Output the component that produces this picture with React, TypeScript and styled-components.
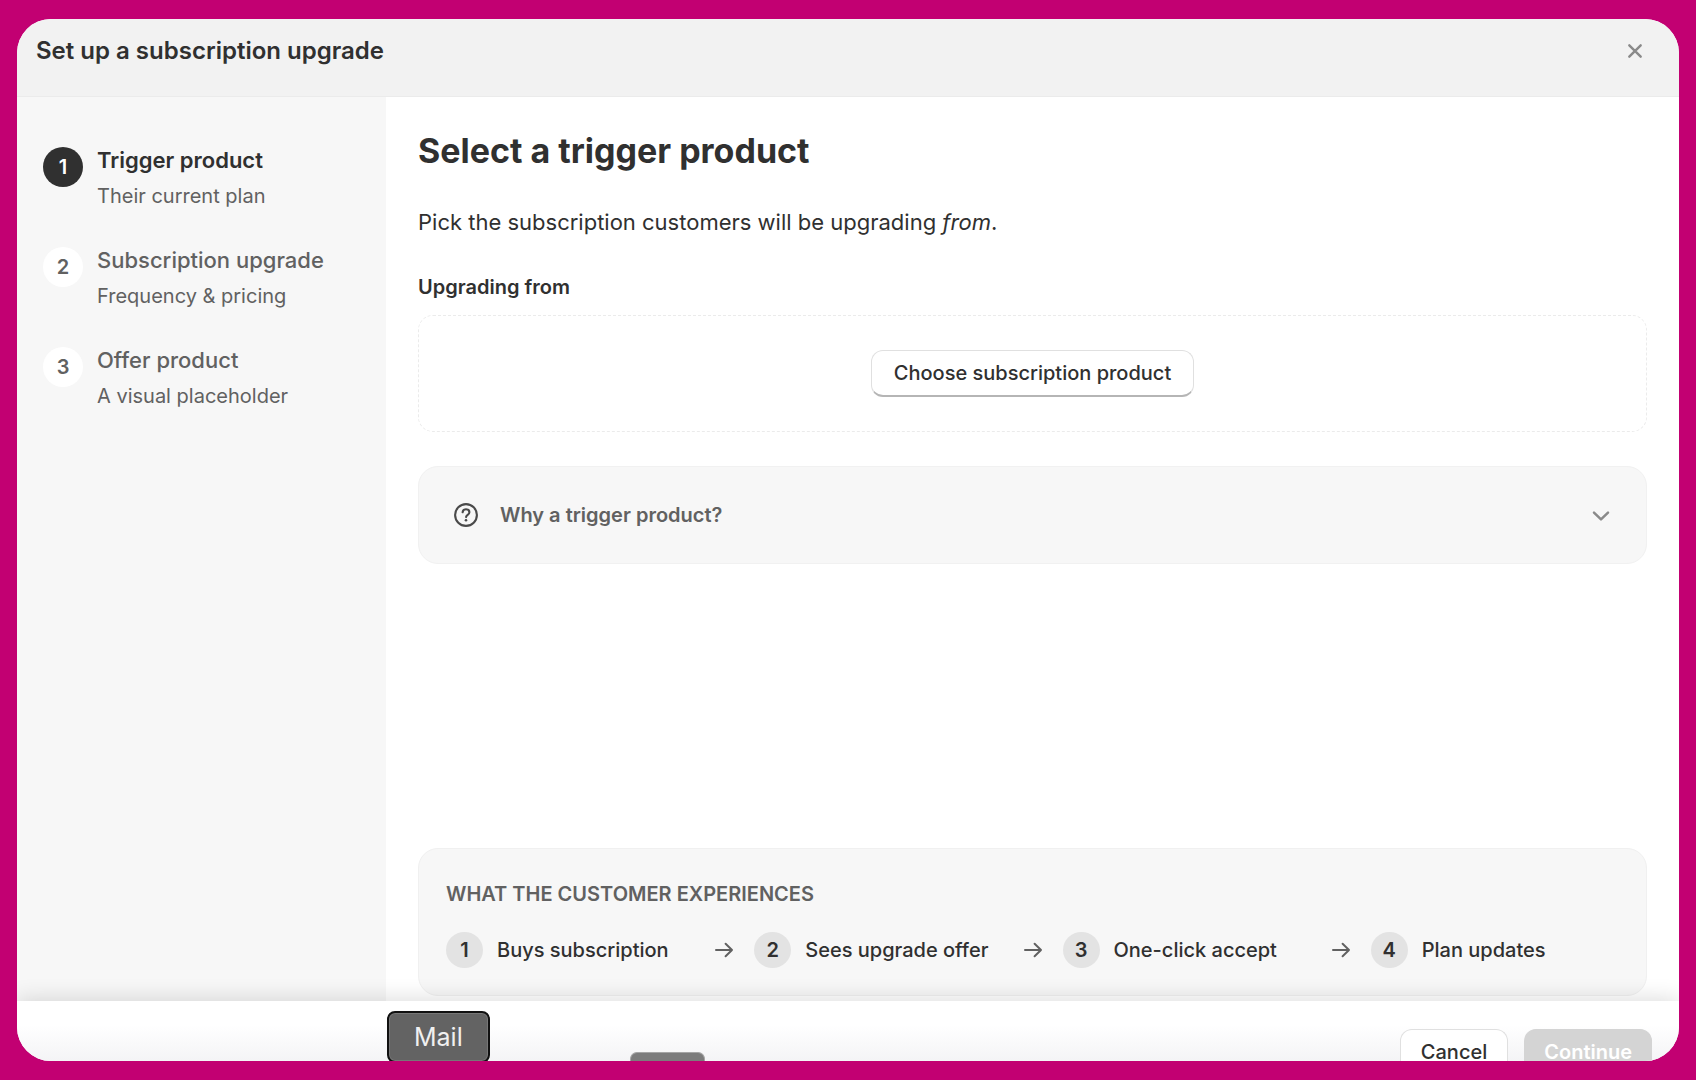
import React from "react";
import styled, { createGlobalStyle, css } from "styled-components";

const GlobalStyle = createGlobalStyle`
  *, *::before, *::after { box-sizing: border-box; }
  body {
    margin: 0;
    background: #c20072;
    color: #303030;
    font-family: Inter, "Liberation Sans", sans-serif;
  }
  button { font: inherit; color: inherit; cursor: pointer; }
  h1, h2, h3, p, ol { margin: 0; padding: 0; }
`;

const Page = styled.div`
  height: 100vh;
  padding: 19px 17px;
  display: flex;
`;

const Dialog = styled.section`
  position: relative;
  flex: 1;
  min-width: 0;
  display: flex;
  flex-direction: column;
  overflow: hidden;
  border-radius: 34px;
  background: #fff;
`;

const Header = styled.header`
  display: flex;
  justify-content: space-between;
  align-items: flex-start;
  height: 78px;
  padding: 16px 32px 0 19px;
  background: #f2f2f2;
  border-bottom: 1px solid #ebebeb;
`;

const DialogTitle = styled.h1`
  font-size: 24px;
  line-height: 32px;
  font-weight: 600;
`;

const CloseButton = styled.button`
  display: grid;
  place-items: center;
  width: 24px;
  height: 32px;
  padding: 0;
  border: 0;
  background: none;
  color: #8a8a8a;
`;

const Body = styled.div`
  flex: 1;
  min-height: 0;
  display: flex;
`;

const Sidebar = styled.nav`
  width: 369px;
  flex-shrink: 0;
  padding: 47px 26px;
  background: #f7f7f7;
`;

const StepList = styled.ol`
  display: flex;
  flex-direction: column;
  gap: 32px;
  list-style: none;
`;

const Step = styled.li`
  display: flex;
  align-items: flex-start;
  gap: 14px;
  color: #616161;
`;

const StepNumber = styled.span<{ $active?: boolean }>`
  display: grid;
  place-items: center;
  width: 40px;
  height: 40px;
  margin-top: 3px;
  border-radius: 50%;
  background: #fff;
  font-size: 20px;
  line-height: 24px;
  font-weight: 600;
  ${(p) => p.$active && css`background: #303030; color: #fff;`}
`;

const StepText = styled.div`
  display: flex;
  flex-direction: column;
  gap: 4px;
`;

const StepTitle = styled.h3<{ $active?: boolean }>`
  font-size: 22px;
  line-height: 32px;
  font-weight: ${(p) => (p.$active ? 600 : 500)};
  color: ${(p) => (p.$active ? "#303030" : "#616161")};
`;

const StepHint = styled.p`
  font-size: 20px;
  line-height: 32px;
`;

const Main = styled.main`
  flex: 1;
  min-width: 0;
  display: flex;
  flex-direction: column;
  padding: 32px 32px 5px;
`;

const Heading = styled.h2`
  font-size: 34px;
  line-height: 44px;
  font-weight: 700;
`;

const Intro = styled.p`
  margin-top: 33px;
  font-size: 22px;
  line-height: 32px;
`;

const FieldLabel = styled.h3`
  margin-top: 33px;
  font-size: 20px;
  line-height: 32px;
  font-weight: 600;
`;

const Button = styled.button<{ $muted?: boolean }>`
  height: 47px;
  padding: 0 20px;
  border: 1px solid #e0e0e0;
  border-bottom: 2px solid #b5b5b5;
  border-radius: 12px;
  background: #fff;
  font-size: 20px;
  line-height: 24px;
  font-weight: 500;
  white-space: nowrap;
  ${(p) => p.$muted && css`
    padding: 0 19px;
    border-color: #d4d4d4;
    background: #d4d4d4;
    color: #fff;
    font-weight: 600;
    cursor: default;
  `}
`;

const Picker = styled.div`
  display: flex;
  justify-content: center;
  margin-top: 12px;
  padding: 34px 24px;
  border: 1px dashed #ebebeb;
  border-radius: 15px;

  ${Button} {
    padding: 0 22px;
  }
`;

const Disclosure = styled.button`
  display: flex;
  align-items: center;
  margin-top: 34px;
  padding: 32px 35px;
  border: 1px solid #f1f1f1;
  border-radius: 20px;
  background: #f7f7f7;
  color: #616161;
  font-size: 20px;
  line-height: 32px;
  font-weight: 600;
  text-align: left;
`;

const DisclosureLabel = styled.span`
  flex: 1;
  margin-left: 22px;
`;

const Journey = styled.section`
  margin-top: auto;
  padding: 29px 27px 27px;
  border: 1px solid #f0f0f0;
  border-radius: 20px;
  background: #f7f7f7;
`;

const JourneyTitle = styled.h3`
  color: #616161;
  font-size: 20px;
  line-height: 32px;
  font-weight: 600;
  text-transform: uppercase;
`;

const JourneyRow = styled.div`
  display: flex;
  align-items: center;
  gap: 20px;
  margin-top: 22px;
  color: #616161;
`;

const JourneyStep = styled.div`
  flex: 1;
  display: flex;
  align-items: center;
  gap: 14px;
  color: #303030;
  font-size: 20px;
  line-height: 36px;
  font-weight: 500;
  white-space: nowrap;
`;

const JourneyNumber = styled.span`
  width: 37px;
  border-radius: 50%;
  background: #e3e3e3;
  text-align: center;
  font-weight: 600;
`;

const Footer = styled.footer`
  position: relative;
  display: flex;
  justify-content: flex-end;
  align-items: flex-start;
  gap: 16px;
  height: 60px;
  padding: 28px 27px 0;
  background: linear-gradient(#fff 40%, #f4f4f6);
  box-shadow: 0 -2px 22px rgba(0, 0, 0, 0.14);
`;

const DockTooltip = styled.div`
  position: absolute;
  left: 370px;
  bottom: -2px;
  padding: 6px 25px;
  border: 2px solid #111;
  border-radius: 8px;
  background: #636363;
  box-shadow: inset 0 0 0 1px #777;
  color: #f0f0f0;
  font-size: 25px;
  line-height: 36px;
`;

const DockHandle = styled.div`
  position: absolute;
  left: 613px;
  bottom: 0;
  width: 75px;
  height: 9px;
  border: 1px solid #a5a5a5;
  border-bottom: 0;
  border-radius: 7px 7px 0 0;
  background: #7c7c7c;
`;

const CloseIcon = () => (
  <svg width="16" height="16" viewBox="0 0 16 16" fill="none" stroke="currentColor" strokeWidth="2.4" strokeLinecap="round" aria-hidden="true">
    <path d="M2.3 2.3 13.7 13.7M13.7 2.3 2.3 13.7" />
  </svg>
);

const QuestionIcon = () => (
  <svg width="24" height="24" viewBox="0 0 24 24" fill="none" stroke="#4a4a4a" strokeWidth="2.1" strokeLinecap="round" strokeLinejoin="round" aria-hidden="true">
    <circle cx="12" cy="12" r="10.9" />
    <path d="M8.6 9.3C8.8 7.4 10.1 6.3 12 6.3c2 0 3.4 1.1 3.4 2.9 0 2.7-3.3 2.6-3.3 4.9" />
    <circle cx="12" cy="17.3" r="1.3" fill="#4a4a4a" stroke="none" />
  </svg>
);

const ChevronIcon = () => (
  <svg width="20" height="20" viewBox="0 0 20 20" fill="none" stroke="#8a8a8a" strokeWidth="2.5" strokeLinecap="round" strokeLinejoin="round" aria-hidden="true">
    <path d="M3 7.6 10 14.4 17 7.6" />
  </svg>
);

const ArrowIcon = () => (
  <svg width="20" height="20" viewBox="0 0 20 20" fill="none" stroke="currentColor" strokeWidth="2" strokeLinecap="round" strokeLinejoin="round" aria-hidden="true">
    <path d="M2 10H18M11.6 3.8 18 10 11.6 16.2" />
  </svg>
);

const steps = [
  { title: "Trigger product", hint: "Their current plan" },
  { title: "Subscription upgrade", hint: "Frequency & pricing" },
  { title: "Offer product", hint: "A visual placeholder" },
];

const journey = ["Buys subscription", "Sees upgrade offer", "One-click accept", "Plan updates"];

export default function App() {
  const current = 0;
  return (
    <>
      <GlobalStyle />
      <Page>
        <Dialog role="dialog" aria-labelledby="dialog-title">
          <Header>
            <DialogTitle id="dialog-title">Set up a subscription upgrade</DialogTitle>
            <CloseButton type="button" aria-label="Close">
              <CloseIcon />
            </CloseButton>
          </Header>
          <Body>
            <Sidebar>
              <StepList>
                {steps.map((step, i) => (
                  <Step key={step.title}>
                    <StepNumber $active={i === current}>{i + 1}</StepNumber>
                    <StepText>
                      <StepTitle $active={i === current}>{step.title}</StepTitle>
                      <StepHint>{step.hint}</StepHint>
                    </StepText>
                  </Step>
                ))}
              </StepList>
            </Sidebar>
            <Main>
              <Heading>Select a trigger product</Heading>
              <Intro>
                Pick the subscription customers will be upgrading <em>from</em>.
              </Intro>
              <FieldLabel>Upgrading from</FieldLabel>
              <Picker>
                <Button type="button">Choose subscription product</Button>
              </Picker>
              <Disclosure type="button" aria-expanded={false}>
                <QuestionIcon />
                <DisclosureLabel>Why a trigger product?</DisclosureLabel>
                <ChevronIcon />
              </Disclosure>
              <Journey>
                <JourneyTitle>What the customer experiences</JourneyTitle>
                <JourneyRow>
                  {journey.map((label, i) => (
                    <React.Fragment key={label}>
                      {i > 0 && <ArrowIcon />}
                      <JourneyStep>
                        <JourneyNumber>{i + 1}</JourneyNumber>
                        {label}
                      </JourneyStep>
                    </React.Fragment>
                  ))}
                </JourneyRow>
              </Journey>
            </Main>
          </Body>
          <Footer>
            <Button type="button">Cancel</Button>
            <Button type="button" $muted disabled>
              Continue
            </Button>
          </Footer>
          <DockTooltip>Mail</DockTooltip>
          <DockHandle />
        </Dialog>
      </Page>
    </>
  );
}
